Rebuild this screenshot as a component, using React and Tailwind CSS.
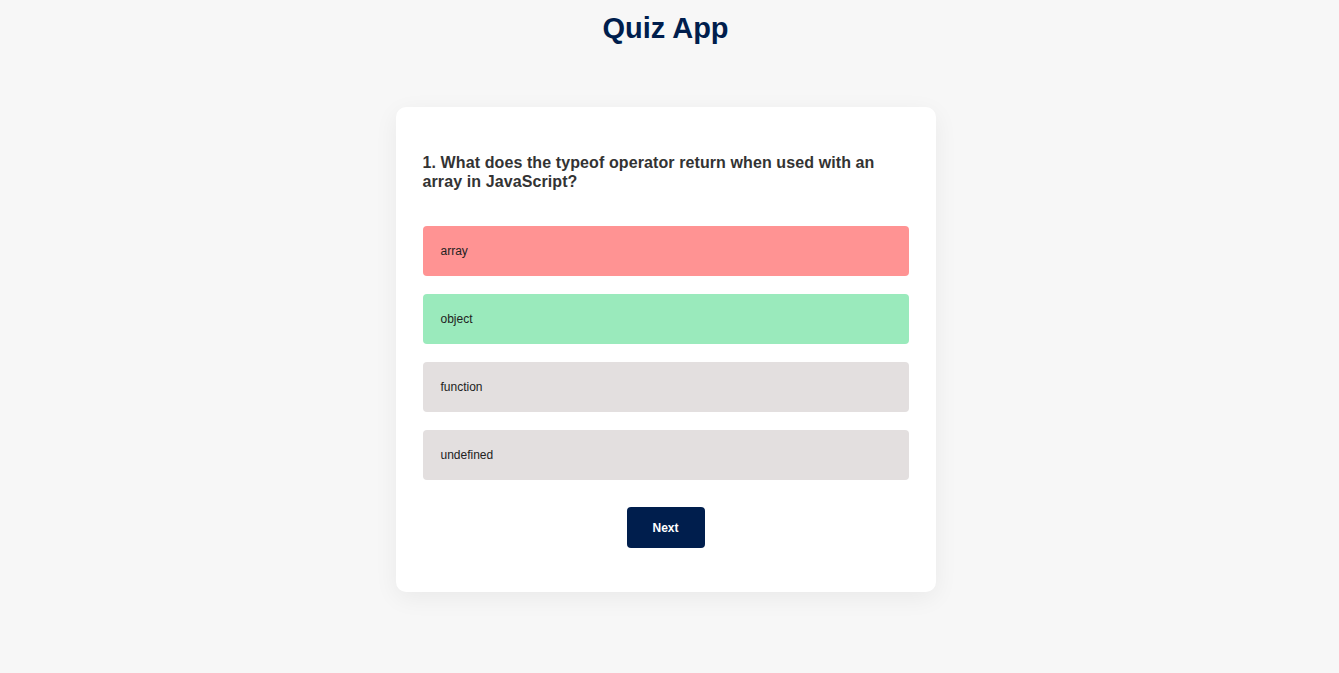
import React, { useState } from 'react';

const questions = [
    {
        question: 'What does the typeof operator return when used with an array in JavaScript?',
        answers: [
            { text: 'array', correct: false },
            { text: 'object', correct: true },
            { text: 'function', correct: false },
            { text: 'undefined', correct: false },
        ],
    },
];

const App = () => {
    const [current] = useState(0);
    const [picked] = useState(0);
    const q = questions[current];

    const answerClass = (i, a) => {
        if (picked === null) return 'bg-[#e3dfdf]';
        if (a.correct) return 'bg-[#9aeabc]';
        if (i === picked) return 'bg-[#ff9393]';
        return 'bg-[#e3dfdf]';
    };

    return (
        <div className="min-h-screen bg-[#f7f7f7] pr-2 font-['Liberation_Sans',Arial,sans-serif]">
            <h1 className="pt-3 text-center text-[29px] leading-[32px] font-bold text-[#001e4d]">
                Quiz App
            </h1>

            <div className="mx-auto mt-[63px] w-[540px] rounded-[10px] bg-white px-[27px] pt-[46px] pb-[44px] shadow-[0_6px_24px_rgba(0,0,0,0.06)]">
                <h2 className="text-[16px] leading-[19px] tracking-[0.1px] font-bold text-[#333]">
                    {`${current + 1}. ${q.question}`}
                </h2>

                <div className="mt-[35px] flex flex-col gap-[18px]">
                    {q.answers.map((a, i) => (
                        <button
                            key={a.text}
                            className={`h-[50px] w-full rounded-[4px] px-[18px] text-left text-[12px] text-[#222] ${answerClass(i, a)}`}
                        >
                            {a.text}
                        </button>
                    ))}
                </div>

                <div className="mt-[27px] flex justify-center">
                    <button className="h-[41px] w-[78px] rounded-[4px] bg-[#001e4d] text-[12px] font-bold text-white">
                        Next
                    </button>
                </div>
            </div>
        </div>
    );
};

export default App;
